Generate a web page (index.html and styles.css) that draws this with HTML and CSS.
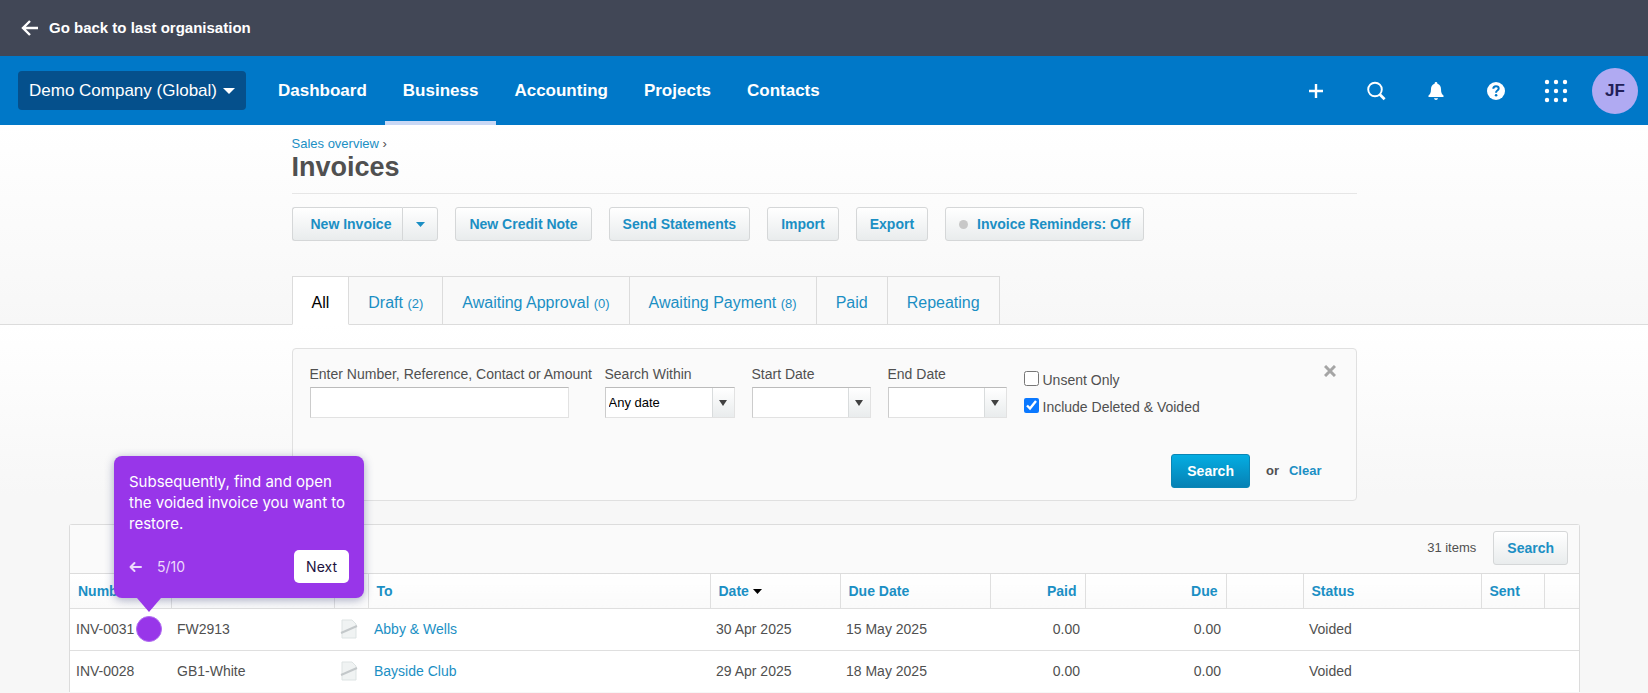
FILE: index.html
```html
<!DOCTYPE html>
<html lang="en">

<head>
    <meta charset="UTF-8">
    <meta name="viewport" content="width=device-width, initial-scale=1.0">
    <title>Invoices</title>

    <link rel="stylesheet" href="styles.css">
</head>

<body>

    <div class="topbar">
        <a class="topbar__link" href="#">
            <svg width="18" height="18" viewBox="0 0 18 18" fill="none" stroke="currentColor" stroke-width="2.400">
                <path d="M17 9H3M9 2L2 9l7 7" />
            </svg>
            Go back to last organisation
        </a>
    </div>

    <header class="header">
        <button class="header__org" type="button">
            Demo Company (Global)
            <svg width="12" height="6" viewBox="0 0 12 6" fill="currentColor"><path d="M0 0h12L6 6z" /></svg>
        </button>
        <nav class="nav">
            <a class="nav__link" href="#">Dashboard</a>
            <a class="nav__link active" href="#">Business</a>
            <a class="nav__link" href="#">Accounting</a>
            <a class="nav__link" href="#">Projects</a>
            <a class="nav__link" href="#">Contacts</a>
        </nav>
        <div class="header__tools">
            <button class="header__tool" type="button" aria-label="Create new">
                <svg width="24" height="24" viewBox="0 0 24 24" fill="none" stroke="currentColor" stroke-width="2.400">
                    <path d="M12 5v14M5 12h14" />
                </svg>
            </button>
            <button class="header__tool" type="button" aria-label="Search">
                <svg width="24" height="24" viewBox="0 0 24 24" fill="none" stroke="currentColor">
                    <circle cx="11" cy="10.500" r="6.800" stroke-width="1.900" />
                    <path d="M15.600 15.300l5 5" stroke-width="2.800" />
                </svg>
            </button>
            <button class="header__tool" type="button" aria-label="Notifications">
                <svg width="24" height="24" viewBox="0 0 24 24" fill="currentColor">
                    <path d="M12 3c.8 0 1.400.6 1.400 1.400v.4c2.400.7 3.600 2.700 3.600 5.200 0 3.900.9 5.400 2.500 6.500V18h-15v-1.500C6.100 15.400 7 13.900 7 10c0-2.500 1.200-4.500 3.600-5.200v-.4C10.600 3.600 11.200 3 12 3zM10 19.300h4c-.3 1-1 1.700-2 1.700s-1.700-.7-2-1.700z" />
                </svg>
            </button>
            <button class="header__tool" type="button" aria-label="Help">
                <svg width="24" height="24" viewBox="0 0 24 24">
                    <circle cx="12" cy="12" r="9" fill="currentColor" />
                    <path class="header__mark" d="M9.300 9.800c0-1.500 1.100-2.500 2.700-2.500s2.700 1 2.700 2.300c0 1.900-2.600 1.900-2.600 3.700v.4" />
                    <circle class="header__dot" cx="12.100" cy="16.300" r="1.300" />
                </svg>
            </button>
            <button class="header__tool" type="button" aria-label="Apps">
                <svg width="24" height="24" viewBox="0 0 24 24" fill="currentColor">
                    <circle cx="3" cy="3" r="2.200" /><circle cx="12" cy="3" r="2.200" /><circle cx="21" cy="3" r="2.200" />
                    <circle cx="3" cy="12" r="2.200" /><circle cx="12" cy="12" r="2.200" /><circle cx="21" cy="12" r="2.200" />
                    <circle cx="3" cy="21" r="2.200" /><circle cx="12" cy="21" r="2.200" /><circle cx="21" cy="21" r="2.200" />
                </svg>
            </button>
            <button class="header__avatar" type="button">JF</button>
        </div>
    </header>

    <section class="page-head">
        <div class="container">
            <div class="breadcrumb"><a href="#">Sales overview</a> ›</div>
            <h1 class="page-head__title">Invoices</h1>
            <div class="actions">
                <div class="split">
                    <button class="button split__main" type="button">New Invoice</button>
                    <button class="button split__toggle" type="button" aria-label="More">
                        <svg width="9" height="5" viewBox="0 0 9 5" fill="currentColor"><path d="M0 0h9L4.500 5z" /></svg>
                    </button>
                </div>
                <button class="button" type="button">New Credit Note</button>
                <button class="button" type="button">Send Statements</button>
                <button class="button" type="button">Import</button>
                <button class="button" type="button">Export</button>
                <button class="button" type="button"><span class="button__dot"></span>Invoice Reminders: Off</button>
            </div>
            <nav class="tabs">
                <a class="tabs__tab active" href="#">All</a>
                <a class="tabs__tab" href="#">Draft <small>(2)</small></a>
                <a class="tabs__tab" href="#">Awaiting Approval <small>(0)</small></a>
                <a class="tabs__tab" href="#">Awaiting Payment <small>(8)</small></a>
                <a class="tabs__tab" href="#">Paid</a>
                <a class="tabs__tab" href="#">Repeating</a>
            </nav>
        </div>
    </section>

    <main class="content">
        <form class="container filter">
            <div class="filter__fields">
                <div class="field field--text">
                    <label for="keyword">Enter Number, Reference, Contact or Amount</label>
                    <input class="field__input" id="keyword" type="text">
                </div>
                <div class="field field--within">
                    <label for="within">Search Within</label>
                    <div class="combo">
                        <select id="within">
                            <option>Any date</option>
                        </select>
                        <span class="combo__arrow"></span>
                    </div>
                </div>
                <div class="field field--date">
                    <label for="start">Start Date</label>
                    <div class="combo">
                        <input id="start" type="text">
                        <button class="combo__arrow" type="button" aria-label="Pick start date"></button>
                    </div>
                </div>
                <div class="field field--date">
                    <label for="end">End Date</label>
                    <div class="combo">
                        <input id="end" type="text">
                        <button class="combo__arrow" type="button" aria-label="Pick end date"></button>
                    </div>
                </div>
                <div class="checks">
                    <label><input type="checkbox"> Unsent Only</label>
                    <label><input type="checkbox" checked> Include Deleted &amp; Voided</label>
                </div>
                <button class="filter__close" type="button" aria-label="Close">
                    <svg width="12" height="12" viewBox="0 0 12 12" fill="none" stroke="currentColor" stroke-width="3">
                        <path d="M1 1l10 10M11 1L1 11" />
                    </svg>
                </button>
            </div>
            <div class="filter__submit">
                <button class="button button--primary" type="submit">Search</button>
                <span>or</span>
                <a href="#">Clear</a>
            </div>
        </form>

        <div class="list">
            <div class="list__bar">
                <span>31 items</span>
                <button class="button" type="button">Search</button>
            </div>
            <table class="table">
                <colgroup>
                    <col class="col-number">
                    <col class="col-ref">
                    <col class="col-file">
                    <col>
                    <col class="col-date">
                    <col class="col-due-date">
                    <col class="col-paid">
                    <col class="col-due">
                    <col class="col-gap">
                    <col class="col-status">
                    <col class="col-sent">
                    <col class="col-end">
                </colgroup>
                <thead>
                    <tr>
                        <th><a href="#">Number</a></th>
                        <th><a href="#">Ref</a></th>
                        <th></th>
                        <th><a href="#">To</a></th>
                        <th><a href="#">Date</a> <svg width="9" height="5" viewBox="0 0 9 5"><path d="M0 0h9L4.500 5z" /></svg></th>
                        <th><a href="#">Due Date</a></th>
                        <th class="num"><a href="#">Paid</a></th>
                        <th class="num"><a href="#">Due</a></th>
                        <th></th>
                        <th><a href="#">Status</a></th>
                        <th><a href="#">Sent</a></th>
                        <th></th>
                    </tr>
                </thead>
                <tbody>
                    <tr>
                        <td>INV-0031</td>
                        <td>FW2913</td>
                        <td>
                            <svg class="file" width="18" height="20" viewBox="0 0 18 20">
                                <path class="file__page" d="M2 1h10l4 4v14H2z" />
                                <path class="file__clip" d="M1 14l16-7" />
                            </svg>
                        </td>
                        <td><a href="#">Abby &amp; Wells</a></td>
                        <td>30 Apr 2025</td>
                        <td>15 May 2025</td>
                        <td class="num">0.00</td>
                        <td class="num">0.00</td>
                        <td></td>
                        <td>Voided</td>
                        <td></td>
                        <td></td>
                    </tr>
                    <tr>
                        <td>INV-0028</td>
                        <td>GB1-White</td>
                        <td>
                            <svg class="file" width="18" height="20" viewBox="0 0 18 20">
                                <path class="file__page" d="M2 1h10l4 4v14H2z" />
                                <path class="file__clip" d="M1 14l16-7" />
                            </svg>
                        </td>
                        <td><a href="#">Bayside Club</a></td>
                        <td>29 Apr 2025</td>
                        <td>18 May 2025</td>
                        <td class="num">0.00</td>
                        <td class="num">0.00</td>
                        <td></td>
                        <td>Voided</td>
                        <td></td>
                        <td></td>
                    </tr>
                </tbody>
            </table>

            <div class="tour">
                <p class="tour__text">Subsequently, find and open the voided invoice you want to restore.</p>
                <div class="tour__nav">
                    <button class="tour__back" type="button" aria-label="Back">
                        <svg width="13" height="12" viewBox="0 0 13 12" fill="none" stroke="currentColor" stroke-width="2" stroke-linecap="round" stroke-linejoin="round">
                            <path d="M12 6H1.500M5.500 2l-4 4 4 4" />
                        </svg>
                    </button>
                    <span class="tour__step">5/10</span>
                    <button class="tour__next" type="button">Next</button>
                </div>
            </div>
            <div class="tour-dot"></div>
        </div>
    </main>

</body>

</html>
```
FILE: styles.css
```css
* {
    box-sizing: border-box;
}

body {
    margin: 0;
    font-family: "Liberation Sans", Arial, sans-serif;
    font-size: 14px;
    line-height: 18px;
    color: #505050;
    background-color: #f7f7f7;
}

a {
    color: #1b8fc4;
    text-decoration: none;
}

button,
input,
select {
    font: inherit;
}

button {
    cursor: pointer;
}

.topbar {
    display: flex;
    align-items: center;
    height: 56px;
    padding: 0 21px;
    background-color: #414756;
}

.topbar__link {
    display: flex;
    align-items: center;
    gap: 10px;
    font-size: 15px;
    font-weight: bold;
    color: #fff;
}

/* header */

.header {
    display: flex;
    align-items: center;
    height: 69px;
    padding: 0 10px 0 18px;
    background-color: #0078c8;
}

.header__org {
    display: flex;
    align-items: center;
    gap: 6px;
    height: 39px;
    padding: 0 11px;
    font-size: 17px;
    color: #fff;
    background-color: #05508c;
    border: 0;
    border-radius: 4px;
}

.nav {
    display: flex;
    align-self: stretch;
    margin-left: 14px;
}

.nav__link {
    display: flex;
    align-items: center;
    padding: 4px 18px 0;
    font-size: 17px;
    font-weight: bold;
    color: #fff;
    border-bottom: 4px solid transparent;
}

.nav__link.active {
    border-bottom-color: #c9d8f5;
}

.header__tools {
    display: flex;
    align-items: center;
    margin-left: auto;
}

.header__tool {
    display: flex;
    align-items: center;
    justify-content: center;
    width: 60px;
    height: 60px;
    padding: 0;
    color: #fff;
    background: none;
    border: 0;
}

.header__mark {
    fill: none;
    stroke: #0078c8;
    stroke-width: 2;
}

.header__dot {
    fill: #0078c8;
}

.header__avatar {
    width: 46px;
    height: 46px;
    margin-left: 6px;
    padding: 0;
    font-size: 17px;
    font-weight: bold;
    color: #221f58;
    background-color: #b0aaf2;
    border: 0;
    border-radius: 50%;
}

/* page head */

.container {
    width: 1065px;
    max-width: 100%;
    margin: 0 auto;
}

.page-head {
    padding-top: 10px;
    background-image: linear-gradient(#fff, #f7f7f7);
    border-bottom: 1px solid #dcdcdc;
}

.breadcrumb {
    font-size: 13px;
}

.page-head__title {
    margin: 0;
    padding-bottom: 12px;
    font-size: 27px;
    line-height: 28px;
    border-bottom: 1px solid #e6e6e6;
}

.actions {
    display: flex;
    flex-wrap: wrap;
    gap: 17px;
    margin: 13px 0 35px;
}

.button {
    display: flex;
    align-items: center;
    justify-content: center;
    height: 34px;
    padding: 0 13px;
    font-weight: bold;
    color: #1b8fc4;
    background-image: linear-gradient(#fff, #e9eced);
    border: 1px solid #d5d7d8;
    border-radius: 3px;
}

.button__dot {
    width: 9px;
    height: 9px;
    margin-right: 9px;
    background-color: #c8c8c8;
    border-radius: 50%;
}

.button--primary {
    padding: 0 15px;
    color: #fff;
    background-image: linear-gradient(#04ade2, #0781b4);
    border-color: #0a86b5;
}

.split {
    display: flex;
}

.split__main {
    padding: 0 11px 0 18px;
    border-right: 0;
    border-radius: 3px 0 0 3px;
}

.split__toggle {
    width: 36px;
    padding: 0;
    border-radius: 0 3px 3px 0;
}

.tabs {
    display: flex;
    margin-bottom: -1px;
}

.tabs__tab {
    height: 49px;
    padding: 17px 19px 0;
    font-size: 16px;
    background-color: #f9f9f9;
    border: 1px solid #dcdcdc;
    border-left: 0;
}

.tabs__tab small {
    font-size: 13px;
}

.tabs__tab.active {
    color: #000;
    background-color: #fff;
    border-left: 1px solid #dcdcdc;
    border-bottom-color: #fff;
}

/* search filter */

.content {
    padding-top: 23px;
    background-image: linear-gradient(#fff, #f7f7f7 170px);
}

.filter {
    height: 153px;
    padding: 16px 17px;
    background-color: #fafafa;
    border: 1px solid #e0e0e0;
    border-radius: 4px;
}

.filter__fields {
    display: flex;
    gap: 17px;
}

.field label {
    display: block;
    margin-bottom: 4px;
    white-space: nowrap;
}

.field--text {
    width: 278px;
}

.field--within {
    width: 130px;
}

.field--date {
    width: 119px;
}

.field__input,
.combo {
    height: 31px;
    background-color: #fff;
    border: 1px solid #e2e2e2;
    border-top-color: #bbb;
    border-left-color: #ccc;
}

.field__input {
    width: 259px;
    max-width: 100%;
}

.combo {
    display: flex;
}

.combo select,
.combo input {
    flex: 1;
    min-width: 0;
    padding: 0 3px;
    font-size: 13px;
    color: #000;
    background: none;
    border: 0;
    appearance: none;
}

.combo__arrow {
    display: flex;
    align-items: center;
    justify-content: center;
    width: 22px;
    padding: 0;
    background-image: linear-gradient(#fff, #e9eced);
    border: 0;
    border-left: 1px solid #d9dcdd;
}

.combo__arrow::after {
    content: "";
    border: solid transparent;
    border-width: 6px 4px 0;
    border-top-color: #404040;
}

.checks {
    display: flex;
    flex-direction: column;
    gap: 9px;
    padding-top: 6px;
}

.checks label {
    display: flex;
    gap: 4px;
}

.checks input {
    width: 15px;
    height: 15px;
    margin: 0;
    accent-color: #0a78ff;
}

.filter__close {
    display: flex;
    align-self: flex-start;
    margin-left: auto;
    padding: 0 3px;
    color: #a5a5a5;
    background: none;
    border: 0;
}

.filter__submit {
    display: flex;
    align-items: center;
    justify-content: flex-end;
    gap: 16px;
    padding-right: 17px;
    margin-top: 36px;
    font-size: 13px;
    font-weight: bold;
}

.filter__submit a {
    margin-left: -6px;
}

.filter__submit .button {
    font-size: 14px;
}

/* invoice list */

.list {
    position: relative;
    margin: 23px 68px 0 69px;
    border: 1px solid #dcdcdc;
    border-bottom: 0;
    border-radius: 3px 3px 0 0;
}

.list__bar {
    display: flex;
    align-items: center;
    justify-content: flex-end;
    gap: 17px;
    height: 49px;
    padding: 0 11px 2px 0;
    font-size: 13px;
    background-color: #fafafa;
    border-bottom: 1px solid #dcdcdc;
}

.list__bar .button {
    font-size: 14px;
}

.table {
    width: 100%;
    table-layout: fixed;
    border-collapse: collapse;
    background-color: #fff;
}

.table th {
    height: 34px;
    padding: 0 8px;
    text-align: left;
    background-image: linear-gradient(#fff, #fafafa);
    border-right: 1px solid #dfdfdf;
    border-bottom: 1px solid #dfdfdf;
}

.table td {
    height: 42px;
    padding: 0 5px 0 6px;
}

.table tr + tr td {
    border-top: 1px solid #dfdfdf;
}

.table th:last-child {
    border-right: 0;
}

.table .num {
    text-align: right;
}

.table th svg {
    vertical-align: 2px;
}

.file {
    display: block;
}

.file__page {
    fill: #f0f3f3;
    stroke: #dde3e3;
}

.file__clip {
    stroke: #c3c8ca;
    stroke-width: 2;
}

.col-number {
    width: 101px;
}

.col-ref {
    width: 163px;
}

.col-file {
    width: 34px;
}

.col-date {
    width: 130px;
}

.col-due-date {
    width: 150px;
}

.col-paid {
    width: 95px;
}

.col-due {
    width: 141px;
}

.col-gap {
    width: 77px;
}

.col-status {
    width: 178px;
}

.col-sent {
    width: 63px;
}

.col-end {
    width: 35px;
}

/* guided tour */

.tour {
    position: absolute;
    top: -69px;
    left: 44px;
    width: 250px;
    padding: 15px;
    font-family: Inter, "Open Sans", sans-serif;
    color: #fff;
    background-color: #9836e9;
    border-radius: 8px;
    box-shadow: 0 2px 10px rgba(40, 50, 110, .4);
}

.tour::after {
    content: "";
    position: absolute;
    top: 100%;
    left: 23px;
    border: solid transparent;
    border-width: 14px 12px 0;
    border-top-color: #9836e9;
}

.tour__text {
    margin: 0 0 16px;
    font-size: 15px;
    line-height: 21px;
}

.tour__nav {
    display: flex;
    align-items: center;
}

.tour__back {
    display: flex;
    padding: 0;
    color: #ecd9fb;
    background: none;
    border: 0;
}

.tour__step {
    margin-left: 15px;
    color: #ecd9fb;
}

.tour__next {
    height: 33px;
    margin-left: auto;
    padding: 0 12px;
    font-size: 14px;
    color: #1d1340;
    background-color: #fff;
    border: 0;
    border-radius: 5px;
}

.tour-dot {
    position: absolute;
    top: 91px;
    left: 66px;
    width: 26px;
    height: 26px;
    background-color: #9836e9;
    border: 1px solid #b06cf0;
    border-radius: 50%;
}
```
